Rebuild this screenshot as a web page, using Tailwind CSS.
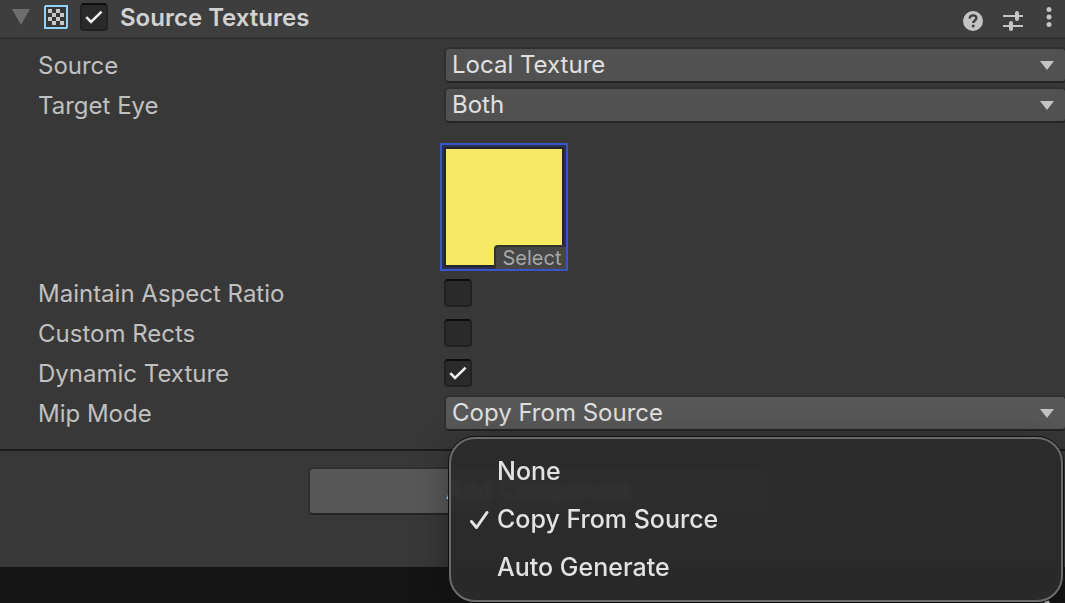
<!DOCTYPE html>
<html lang="en">
<head>
  <meta charset="UTF-8" />
  <meta name="viewport" content="width=device-width, initial-scale=1.0" />
  <title>Source Textures</title>
  <script src="https://cdn.jsdelivr.net/npm/@tailwindcss/browser@4"></script>
</head>
<body class="bg-[#141414] text-[#c0c0c0] font-['Inter','Liberation_Sans',sans-serif] text-2xl h-screen flex flex-col overflow-hidden">

<section class="bg-[#383838] border-b-2 border-[#1c1c1c] pb-4">
  <header class="flex items-center h-[39px] pb-1 pl-[11px] pr-3 bg-[#3e3e3e] border-b-2 border-[#303030]">
    <button type="button" aria-label="Collapse" class="w-5 h-4">
      <svg class="w-5 h-4" viewBox="0 0 20 16"><path d="M1 0h18L10 16z" fill="#6e6e6e"/></svg>
    </button>
    <svg class="w-6 h-6 ml-[13px]" viewBox="0 0 24 24" shape-rendering="crispEdges">
      <rect x="1" y="1" width="22" height="22" rx="1" fill="#383838" stroke="#8fd3fb" stroke-width="2"/>
      <path fill="#c8c8c8" d="M4 4h4v4H4zM12 4h4v4h-4zM8 8h4v4H8zM16 8h4v4h-4zM4 12h4v4H4zM12 12h4v4h-4zM8 16h4v4H8zM16 16h4v4h-4z"/>
    </svg>
    <span class="relative ml-3 w-7 h-7">
      <input id="enabled" type="checkbox" checked class="peer appearance-none block w-7 h-7 rounded bg-[#2a2a2a] border-2 border-[#212121] border-t-[#0d0d0d]" />
      <svg class="absolute inset-0 w-7 h-7 pointer-events-none hidden peer-checked:block" viewBox="0 0 28 28" fill="none" stroke="#eeeeee" stroke-width="2.6"><path d="M6.3 14.2l4.7 4.8L21.6 8.6"/></svg>
    </span>
    <label for="enabled" class="ml-3 pt-0.5 font-semibold text-[#d2d2d2]">Source Textures</label>
    <div class="ml-auto flex items-center">
      <button type="button" aria-label="Help" class="mt-2">
        <svg class="w-5 h-5" viewBox="0 0 20 20"><circle cx="10" cy="10" r="10" fill="#c4c4c4"/><path d="M6.6 7.6C6.8 5.5 8.1 4.3 10.1 4.3c2 0 3.3 1.1 3.3 2.8 0 2.4-3.2 2.4-3.2 5" fill="none" stroke="#3e3e3e" stroke-width="2.3"/><circle cx="10.2" cy="15" r="1.5" fill="#3e3e3e"/></svg>
      </button>
      <button type="button" aria-label="Presets" class="mt-2 ml-5">
        <svg class="w-5 h-5" viewBox="0 0 20 20" fill="none" stroke="#c4c4c4" stroke-width="2"><path d="M0 5h12M16 5h4M0 15h6M10 15h10"/><path d="M14 2v6M8 12v6" stroke-width="4" stroke-linecap="round"/></svg>
      </button>
      <button type="button" aria-label="More" class="ml-[22px]">
        <svg class="w-2 h-5" viewBox="0 0 8 20" fill="#c4c4c4"><circle cx="4" cy="2.5" r="2.5"/><circle cx="4" cy="10" r="2.5"/><circle cx="4" cy="17.5" r="2.5"/></svg>
      </button>
    </div>
  </header>

  <div class="pt-[6px] pl-[38px] grid grid-cols-[406px_1fr] auto-rows-[40px] items-center">
    <label for="source" class="pt-0.5">Source</label>
    <div class="relative -mr-0.5">
      <select id="source" class="appearance-none block w-full h-9 pl-1.5 rounded-[5px] bg-[#515151] border-2 border-[#303030] border-b-[#242424] text-[#e0e0e0] leading-8">
        <option>Local Texture</option>
      </select>
      <svg class="absolute right-[13px] top-[14px] w-[14px] h-[9px] pointer-events-none" viewBox="0 0 14 9"><path d="M0 0h14L7 9z" fill="#c4c4c4"/></svg>
    </div>

    <label for="eye" class="pt-0.5">Target Eye</label>
    <div class="relative -mr-0.5">
      <select id="eye" class="appearance-none block w-full h-9 pl-1.5 rounded-[5px] bg-[#515151] border-2 border-[#303030] border-b-[#242424] text-[#e0e0e0] leading-8">
        <option>Both</option>
      </select>
      <svg class="absolute right-[13px] top-[14px] w-[14px] h-[9px] pointer-events-none" viewBox="0 0 14 9"><path d="M0 0h14L7 9z" fill="#c4c4c4"/></svg>
    </div>
  </div>

  <!-- texture slot -->
  <div class="pl-[440px] pt-[18px] pb-[2px]">
    <div class="relative w-32 h-32 border-2 border-[#3a55c8] bg-[#2a3050] p-0.5">
      <div class="h-full bg-[#f6e964] border-2 border-[#22252c]"></div>
      <button type="button" class="absolute right-0 bottom-0 h-6 w-[72px] pr-0.5 pl-1 rounded-tl bg-[#464646] border-t-2 border-l-2 border-[#333327] text-xl leading-5 text-[#a8a8a8]">Select</button>
    </div>
  </div>

  <div class="pl-[38px] grid grid-cols-[406px_1fr] auto-rows-[40px] items-center">
    <label for="aspect" class="pt-0.5">Maintain Aspect Ratio</label>
    <span class="relative w-7 h-7">
      <input id="aspect" type="checkbox" class="peer appearance-none block w-7 h-7 rounded bg-[#2a2a2a] border-2 border-[#212121] border-t-[#0d0d0d]" />
      <svg class="absolute inset-0 w-7 h-7 pointer-events-none hidden peer-checked:block" viewBox="0 0 28 28" fill="none" stroke="#eeeeee" stroke-width="2.6"><path d="M6.3 14.2l4.7 4.8L21.6 8.6"/></svg>
    </span>

    <label for="rects" class="pt-0.5">Custom Rects</label>
    <span class="relative w-7 h-7">
      <input id="rects" type="checkbox" class="peer appearance-none block w-7 h-7 rounded bg-[#2a2a2a] border-2 border-[#212121] border-t-[#0d0d0d]" />
      <svg class="absolute inset-0 w-7 h-7 pointer-events-none hidden peer-checked:block" viewBox="0 0 28 28" fill="none" stroke="#eeeeee" stroke-width="2.6"><path d="M6.3 14.2l4.7 4.8L21.6 8.6"/></svg>
    </span>

    <label for="dynamic" class="pt-0.5">Dynamic Texture</label>
    <span class="relative w-7 h-7">
      <input id="dynamic" type="checkbox" checked class="peer appearance-none block w-7 h-7 rounded bg-[#2a2a2a] border-2 border-[#212121] border-t-[#0d0d0d]" />
      <svg class="absolute inset-0 w-7 h-7 pointer-events-none hidden peer-checked:block" viewBox="0 0 28 28" fill="none" stroke="#eeeeee" stroke-width="2.6"><path d="M6.3 14.2l4.7 4.8L21.6 8.6"/></svg>
    </span>

    <label for="mip" class="pt-0.5">Mip Mode</label>
    <div class="relative -mr-0.5">
      <select id="mip" class="appearance-none block w-full h-9 pl-1.5 rounded-[5px] bg-[#585858] border-2 border-[#303030] border-b-[#242424] text-[#e0e0e0] leading-8">
        <option>Copy From Source</option>
      </select>
      <svg class="absolute right-[13px] top-[14px] w-[14px] h-[9px] pointer-events-none" viewBox="0 0 14 9"><path d="M0 0h14L7 9z" fill="#c4c4c4"/></svg>

      <!-- open menu -->
      <div role="menu" class="absolute z-10 top-[42px] left-[5px] right-1 pt-[9px] pb-2 rounded-[26px] border-2 border-[#6a6a6a] bg-[#2a2a2a]/94 backdrop-blur-[2px] shadow-[0_0_0_1px_#111,0_6px_36px_rgba(0,0,0,0.35)] text-[25px] font-medium text-[#e2e2e2]">
        <button type="button" role="menuitemradio" aria-checked="false" class="flex items-center w-full h-12 pl-[46px]">None</button>
        <button type="button" role="menuitemradio" aria-checked="true" class="flex items-center w-full h-12 pl-[18px]">
          <svg class="w-5 h-5 mr-2" viewBox="0 0 20 20" fill="none" stroke="#e2e2e2" stroke-width="3" stroke-linecap="round" stroke-linejoin="round"><path d="M2.5 11.5l5 6L18 2.5"/></svg>
          Copy From Source
        </button>
        <button type="button" role="menuitemradio" aria-checked="false" class="flex items-center w-full h-12 pl-[46px]">Auto Generate</button>
      </div>
    </div>
  </div>
</section>

<div class="bg-[#383838] pt-4 pb-[52px] pl-3 flex justify-center">
  <button type="button" class="w-[462px] h-12 rounded-[5px] bg-[#585858] border-2 border-[#303030] border-b-[#242424] text-[#e4e4e4]">Add Component</button>
</div>

<footer class="flex justify-end pt-[33px] pr-[14px]">
  <button type="button" aria-label="Preview options" class="shrink-0">
    <svg class="w-2 h-5" viewBox="0 0 8 20" fill="#c4c4c4"><circle cx="4" cy="2.5" r="2.5"/><circle cx="4" cy="10" r="2.5"/><circle cx="4" cy="17.5" r="2.5"/></svg>
  </button>
</footer>

</body>
</html>
